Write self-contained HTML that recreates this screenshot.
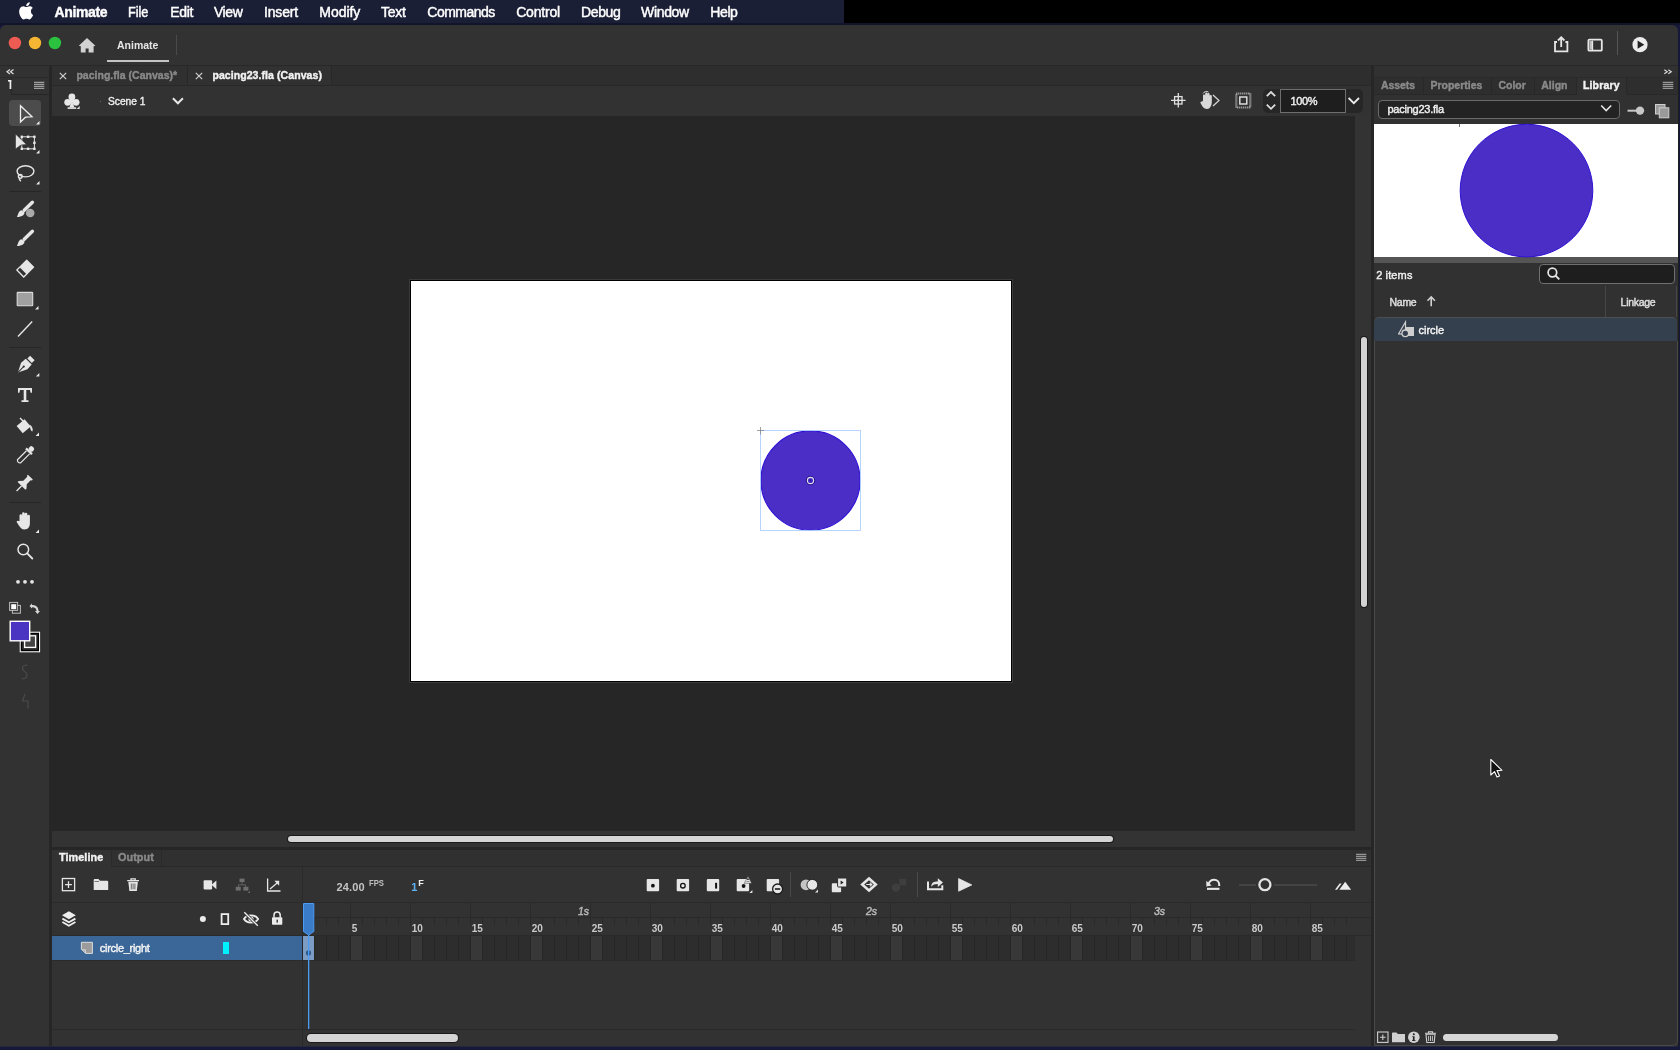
<!DOCTYPE html>
<html><head><meta charset="utf-8">
<style>
*{margin:0;padding:0;box-sizing:border-box}
html,body{width:1680px;height:1050px;overflow:hidden;background:#15183a;font-family:"Liberation Sans",sans-serif;color:#fff}
.a{position:absolute}
.t{position:absolute;white-space:nowrap;line-height:1;-webkit-text-stroke:0.4px currentColor}
#tx{position:absolute;left:0;top:0;width:1680px;height:1050px;will-change:transform}
</style></head><body>
<div class="a" style="left:0px;top:0px;width:844px;height:24px;background:#1b1f36;"></div>
<div class="a" style="left:844px;top:0px;width:836px;height:23px;background:#000;"></div>
<div class="a" style="left:0px;top:23px;width:1680px;height:2px;background:#11142a;"></div>
<div class="a" style="left:0px;top:25px;width:1678px;height:1021px;background:#323232;border-radius:6px 6px 0 0"></div>
<div class="a" style="left:1678px;top:25px;width:2px;height:1025px;background:#15183a;"></div>
<div class="a" style="left:1678px;top:66px;width:1px;height:980px;background:#1e1e1e;"></div>
<div class="a" style="left:0px;top:1046px;width:1680px;height:4px;background:#15183a;"></div>
<div class="a" style="left:0px;top:1046px;width:1678px;height:1px;background:#24263a;"></div>
<div class="a" style="left:107px;top:60px;width:62px;height:2px;background:#c4c4c4;"></div>
<div class="a" style="left:176px;top:35px;width:1px;height:20px;background:#4a4a4a;"></div>
<div class="a" style="left:1617px;top:31px;width:1px;height:24px;background:#555;"></div>
<div class="a" style="left:0px;top:65px;width:1678px;height:1px;background:#282828;"></div>
<div class="a" style="left:49px;top:66px;width:3px;height:980px;background:#262626;"></div>
<div class="a" style="left:0px;top:77px;width:49px;height:1px;background:#2a2a2a;"></div>
<div class="a" style="left:9px;top:100px;width:32px;height:26px;background:#4c4c4c;border-radius:4px"></div>
<div class="a" style="left:9px;top:191px;width:32px;height:1px;background:#262626;"></div>
<div class="a" style="left:9px;top:347px;width:32px;height:1px;background:#262626;"></div>
<div class="a" style="left:9px;top:502px;width:32px;height:1px;background:#262626;"></div>
<div class="a" style="left:1371px;top:66px;width:3px;height:980px;background:#262626;"></div>
<div class="a" style="left:52px;top:66px;width:1319px;height:19px;background:#2e2e2e;"></div>
<div class="a" style="left:52px;top:66px;width:135px;height:19px;background:#303030;"></div>
<div class="a" style="left:188px;top:66px;width:143px;height:19px;background:#313131;"></div>
<div class="a" style="left:187px;top:66px;width:1px;height:19px;background:#282828;"></div>
<div class="a" style="left:331px;top:66px;width:1px;height:19px;background:#282828;"></div>
<div class="a" style="left:52px;top:85px;width:1319px;height:1px;background:#282828;"></div>
<div class="a" style="left:52px;top:86px;width:1319px;height:30px;background:#323232;"></div>
<div class="a" style="left:100px;top:100.5px;width:1px;height:1px;background:#666;"></div>
<div class="a" style="left:1263px;top:89px;width:100px;height:24px;background:#262626;border-radius:5px"></div>
<div class="a" style="left:1280px;top:89px;width:66px;height:24px;background:#1e1e1e;border:1px solid #6e6e6e"></div>
<div class="a" style="left:52px;top:116px;width:1303px;height:715px;background:#262626;"></div>
<div class="a" style="left:1355px;top:116px;width:16px;height:715px;background:#333333;"></div>
<div class="a" style="left:1360.7px;top:337px;width:6.4px;height:270px;background:#d4d4d4;border-radius:3.2px;box-shadow:0 0 0 1px #1a1a1a"></div>
<div class="a" style="left:409px;top:279px;width:604px;height:404px;background:#3a3a3a;"></div>
<div class="a" style="left:410px;top:280px;width:602px;height:402px;background:#000000;"></div>
<div class="a" style="left:411px;top:281px;width:600px;height:400px;background:#ffffff;"></div>
<div class="a" style="left:52px;top:831px;width:1319px;height:16px;background:#333333;"></div>
<div class="a" style="left:288px;top:835.5px;width:825px;height:6.6px;background:#d4d4d4;border-radius:3.3px;box-shadow:0 0 0 1px #1a1a1a"></div>
<div class="a" style="left:52px;top:847px;width:1319px;height:3px;background:#262626;"></div>
<div class="a" style="left:52px;top:850px;width:1319px;height:196px;background:#323232;"></div>
<div class="a" style="left:111px;top:850px;width:1260px;height:16px;background:#303030;"></div>
<div class="a" style="left:111px;top:866px;width:1260px;height:1px;background:#292929;"></div>
<div class="a" style="left:111px;top:850px;width:1px;height:16px;background:#2a2a2a;"></div>
<div class="a" style="left:161px;top:850px;width:1px;height:16px;background:#2a2a2a;"></div>
<div class="a" style="left:52px;top:902px;width:250px;height:1px;background:#2a2a2a;"></div>
<div class="a" style="left:302px;top:867px;width:1px;height:179px;background:#2a2a2a;"></div>
<div class="a" style="left:52px;top:935px;width:250px;height:1px;background:#2a2a2a;"></div>
<div class="a" style="left:52px;top:936px;width:250px;height:24px;background:#3b6798;"></div>
<div class="a" style="left:223px;top:942px;width:6px;height:12px;background:#00f0ff;"></div>
<div class="a" style="left:52px;top:960px;width:250px;height:1px;background:#2a2a2a;"></div>
<div class="a" style="left:790px;top:872px;width:1px;height:25px;background:#4a4a4a;"></div>
<div class="a" style="left:917px;top:872px;width:1px;height:25px;background:#4a4a4a;"></div>
<div class="a" style="left:1238.5px;top:884px;width:17px;height:2px;background:#444444;"></div>
<div class="a" style="left:1274px;top:884px;width:42.6px;height:2px;background:#444444;"></div>
<div class="a" style="left:303px;top:903px;width:1068px;height:14px;background:#323232;"></div>
<div class="a" style="left:303px;top:917px;width:1068px;height:1px;background:#2a2a2a;"></div>
<div class="a" style="left:303px;top:935px;width:1068px;height:1px;background:#2a2a2a;"></div>
<div class="a" style="left:303px;top:936px;width:1052px;height:24px;background:#2d2d2d;"></div>
<div class="a" style="left:303px;top:960px;width:1052px;height:1px;background:#2a2a2a;"></div>
<div class="a" style="left:52px;top:902px;width:1319px;height:1px;background:#2a2a2a;"></div>
<div class="a" style="left:303px;top:936px;width:11px;height:24px;background:#7d9cc4;"></div>
<div class="a" style="left:52px;top:1029px;width:1303px;height:1px;background:#2a2a2a;"></div>
<div class="a" style="left:306.6px;top:1033.6px;width:151px;height:8.6px;background:#d4d4d4;border-radius:4.3px;box-shadow:0 0 0 1px #1a1a1a"></div>
<div class="a" style="left:1374px;top:66px;width:304px;height:980px;background:#313131;"></div>
<div class="a" style="left:1374px;top:77px;width:304px;height:1px;background:#2a2a2a;"></div>
<div class="a" style="left:1374px;top:78px;width:304px;height:16px;background:#2e2e2e;"></div>
<div class="a" style="left:1423px;top:78px;width:1px;height:16px;background:#282828;"></div>
<div class="a" style="left:1491px;top:78px;width:1px;height:16px;background:#282828;"></div>
<div class="a" style="left:1534px;top:78px;width:1px;height:16px;background:#282828;"></div>
<div class="a" style="left:1576px;top:78px;width:1px;height:16px;background:#282828;"></div>
<div class="a" style="left:1626px;top:78px;width:1px;height:16px;background:#282828;"></div>
<div class="a" style="left:1577px;top:78px;width:49px;height:17px;background:#313131;"></div>
<div class="a" style="left:1374px;top:94px;width:203px;height:1px;background:#282828;"></div>
<div class="a" style="left:1627px;top:94px;width:51px;height:1px;background:#282828;"></div>
<div class="a" style="left:1378px;top:100px;width:242px;height:19px;background:#232323;border:1px solid #6a6a6a;border-radius:4px"></div>
<div class="a" style="left:1374px;top:124px;width:304px;height:133px;background:#ffffff;"></div>
<div class="a" style="left:1459px;top:124px;width:1px;height:3px;background:#777;"></div>
<div class="a" style="left:1374px;top:257px;width:304px;height:6px;background:#555555;"></div>
<div class="a" style="left:1539px;top:264px;width:136px;height:20px;background:#1e1e1e;border:1px solid #707070;border-radius:4px"></div>
<div class="a" style="left:1605px;top:286px;width:1px;height:31px;background:#474747;"></div>
<div class="a" style="left:1676px;top:286px;width:1px;height:31px;background:#474747;"></div>
<div class="a" style="left:1374px;top:317px;width:303px;height:24px;background:#34404d;border-top:1px solid #4a4f56;border-radius:5px 5px 0 0"></div>
<div class="a" style="left:1443px;top:1034px;width:115px;height:7px;background:#d6d6d6;border-radius:3.5px"></div>
<svg class="a" style="left:0;top:0" width="1680" height="1050" viewBox="0 0 1680 1050">
<path fill="#fff" d="M30.9 11.3c0-2.2 1.8-3.2 1.9-3.3-1-1.5-2.6-1.7-3.2-1.7-1.4-.1-2.6.8-3.3.8-.7 0-1.7-.8-2.8-.8-1.5 0-2.8.9-3.6 2.2-1.5 2.7-.4 6.6 1.1 8.7.7 1 1.6 2.2 2.7 2.2 1.1 0 1.5-.7 2.8-.7 1.3 0 1.7.7 2.8.7 1.2 0 1.9-1.1 2.6-2.1.8-1.2 1.2-2.3 1.2-2.4-.1 0-2.2-.9-2.2-3.4zM28.8 4.9c.6-.7 1-1.7.9-2.7-.9 0-1.9.6-2.5 1.3-.6.6-1.1 1.6-.9 2.6 1 .1 1.9-.5 2.5-1.2z"/>
<circle cx="14.9" cy="43" r="6.2" fill="#ee5b53"/><circle cx="35" cy="43" r="6.2" fill="#f4b633"/><circle cx="54.9" cy="43" r="6.2" fill="#2bc23f"/>
<path fill="#d2d2d2" d="M87 38 L78.8 45.8 L80.8 46.2 L80.8 52.4 L85.6 52.4 L85.6 48.6 L88.6 48.6 L88.6 52.4 L93.6 52.4 L93.6 46.2 L95.4 45.8 Z"/>
<g fill="none" stroke="#e6e6e6" stroke-width="1.8"><path d="M1557 42 H1555 V51.3 H1567.4 V42 H1565.4"/><path d="M1561.2 47 V37.5 M1558 40.5 L1561.2 37.2 L1564.4 40.5"/><rect x="1588.4" y="39.7" width="13.4" height="11" rx="1"/></g>
<rect x="1589.5" y="41" width="2.6" height="8.6" fill="#bdbdbd"/><path d="M1592.5 40.7 V50" stroke="#e6e6e6" stroke-width="1.3"/>
<circle cx="1640" cy="44.7" r="7.6" fill="#ececec"/><path d="M1637.6 40.6 L1644.3 44.7 L1637.6 48.8 Z" fill="#222"/>
<path d="M10 69.5 L7 71.7 L10 73.9 M13.5 69.5 L10.5 71.7 L13.5 73.9" fill="none" stroke="#ddd" stroke-width="1.2"/>
<path d="M11.5 78 V94.5 H49" fill="none" stroke="#262626" stroke-width="1"/><rect x="8" y="80" width="3.2" height="1.6" fill="#f0f0f0"/><rect x="9.6" y="80" width="1.7" height="9" fill="#f0f0f0"/>
<g stroke="#c8c8c8" stroke-width="0.9"><path d="M34 82.3 H44.3 M34 84.3 H44.3 M34 86.3 H44.3 M34 88.3 H44.3"/></g>
<path d="M20.5 105.8 L32 116.8 L25.5 117.2 L20.5 122 Z" fill="none" stroke="#f0f0f0" stroke-width="1.3" stroke-linejoin="miter"/>
<path d="M39.5 121.1 L39.5 124.5 L36.1 124.5 Z" fill="#ececec"/>
<rect x="21.8" y="136.8" width="12.6" height="12" fill="none" stroke="#e0e0e0" stroke-width="1"/>
<g fill="#e8e8e8"><rect x="20.6" y="135.60000000000002" width="2.4" height="2.4"/><rect x="20.6" y="141.60000000000002" width="2.4" height="2.4"/><rect x="20.6" y="147.60000000000002" width="2.4" height="2.4"/><rect x="26.900000000000002" y="135.60000000000002" width="2.4" height="2.4"/><rect x="26.900000000000002" y="147.60000000000002" width="2.4" height="2.4"/><rect x="33.199999999999996" y="135.60000000000002" width="2.4" height="2.4"/><rect x="33.199999999999996" y="141.60000000000002" width="2.4" height="2.4"/><rect x="33.199999999999996" y="147.60000000000002" width="2.4" height="2.4"/></g>
<path d="M15.5 134 L26.5 144.5 L21 145 L15.5 149 Z" fill="#e6e6e6" stroke="#323232" stroke-width="0.6"/>
<path d="M39.5 150.1 L39.5 153.5 L36.1 153.5 Z" fill="#ececec"/>
<g fill="none" stroke="#e6e6e6" stroke-width="1.4"><ellipse cx="25.5" cy="171.3" rx="8.4" ry="5.6"/><circle cx="20.3" cy="176.3" r="1.9"/><path d="M19.5 178 C19 179.5 20 180.5 21 181"/></g>
<path d="M39.5 181.1 L39.5 184.5 L36.1 184.5 Z" fill="#ececec"/>
<circle cx="30.2" cy="213" r="4.3" fill="#a9a9a9"/>
<path d="M24.2 210.2 L32.4 202.2" stroke="#e6e6e6" stroke-width="3.4" stroke-linecap="round"/><path d="M21.6 210.2 C18.8 210.8 18.4 213.6 17 217 C20.8 216.7 24.4 215.6 24.6 212.4 Z" fill="#e6e6e6"/>
<path d="M24.2 239.2 L32.4 231.2" stroke="#e6e6e6" stroke-width="3.4" stroke-linecap="round"/><path d="M21.6 239.2 C18.8 239.8 18.4 242.6 17 246 C20.8 245.7 24.4 244.6 24.6 241.4 Z" fill="#e6e6e6"/>
<g transform="translate(25.3 268.5) rotate(45)"><rect x="-5.5" y="-7.5" width="11" height="10" rx="0.6" fill="#e6e6e6"/><rect x="-4.9" y="2.5" width="9.8" height="4.6" fill="#323232" stroke="#e6e6e6" stroke-width="1.3"/></g>
<rect x="17.2" y="292.4" width="15.5" height="13.3" fill="#a0a0a0" stroke="#dcdcdc" stroke-width="1.1" rx="0.5"/>
<path d="M38.5 306.1 L38.5 309.5 L35.1 309.5 Z" fill="#ececec"/>
<path d="M18 336.4 L32.2 321.6" stroke="#e6e6e6" stroke-width="1.4"/>
<g transform="translate(24.6 365.7) rotate(45)"><rect x="-3.2" y="-11" width="6.4" height="4" fill="#e6e6e6"/><path d="M-4.2 -5.8 H4.2 L4.5 0.5 L0 9.5 L-4.5 0.5 Z" fill="#e6e6e6"/><path d="M0 1 V9" stroke="#323232" stroke-width="1"/><circle cx="0" cy="1.2" r="1.1" fill="#323232"/></g>
<path d="M39.3 373.0 L39.3 376.4 L35.9 376.4 Z" fill="#ececec"/>
<path fill="#e6e6e6" d="M18 388 H32 V392.8 H30.6 L30 389.9 H26.3 V400.3 H28.5 V402 H21.5 V400.3 H23.7 V389.9 H20 L19.4 392.8 H18 Z"/>
<g transform="translate(23.5 426) rotate(-40)"><rect x="-5.2" y="-4.5" width="10.4" height="9.5" fill="#e6e6e6"/></g><path d="M20 418 L24 422" stroke="#e6e6e6" stroke-width="1.5"/><path d="M29.5 424.5 C32 426 33.3 428.5 32.5 431.5 C31 431 30.5 429.5 30.2 428" fill="#e6e6e6"/>
<path d="M39 432.6 L39 436 L35.6 436 Z" fill="#ececec"/>
<g transform="translate(25 455.3) rotate(45)"><rect x="-2.6" y="-11.5" width="5.2" height="5" rx="2" fill="#e6e6e6"/><rect x="-4.2" y="-6.8" width="8.4" height="2.3" fill="#e6e6e6"/><path d="M-2.2 -4.3 V8.5 Q0 11 2.2 8.5 V-4.3" fill="none" stroke="#e6e6e6" stroke-width="1.2"/></g>
<g transform="translate(24 483.5) rotate(45)"><path fill="#e6e6e6" d="M-3.5 -9 H3.5 V-7.8 L2.4 -7 V-1.5 L5.5 2 V3.5 H-5.5 V2 L-2.4 -1.5 V-7 L-3.5 -7.8 Z"/><path d="M0 3.5 L0 10.5" stroke="#e6e6e6" stroke-width="1.3"/></g>
<path fill="#e6e6e6" d="M19.5 521 V515.5 a1.3 1.3 0 0 1 2.6 0 V520 V513.5 a1.3 1.3 0 0 1 2.6 0 V520 V514 a1.3 1.3 0 0 1 2.6 0 V520.5 V516 a1.3 1.3 0 0 1 2.6 0 V523 C29.9 527 28 529.4 24.5 529.4 C22 529.4 20.5 528 19.2 526 L16.8 522.3 C16.2 521.3 17.5 520.2 18.4 521 Z"/>
<path d="M39 529.6 L39 533 L35.6 533 Z" fill="#ececec"/>
<circle cx="23.3" cy="549.5" r="5.3" fill="none" stroke="#e6e6e6" stroke-width="1.5"/><path d="M27.2 553.4 L32.3 558.5" stroke="#e6e6e6" stroke-width="1.8" stroke-linecap="round"/>
<circle cx="18" cy="581.8" r="1.9" fill="#e6e6e6"/><circle cx="25" cy="581.8" r="1.9" fill="#e6e6e6"/><circle cx="32" cy="581.8" r="1.9" fill="#e6e6e6"/>
<rect x="12.4" y="605.4" width="8" height="7.8" fill="none" stroke="#bdbdbd" stroke-width="1"/><rect x="9.6" y="602.4" width="8" height="8" fill="#323232" stroke="#bdbdbd" stroke-width="1"/><rect x="11.2" y="604.2" width="5" height="5" fill="#fff"/>
<path d="M29.5 606 L32 603.5 L32 605 C36 605 38.5 607 38.5 611 L40 611 L37.5 614 L35 611 L36.5 611 C36.5 608.5 35 607.2 32 607.2 L32 608.5 Z" fill="#d8d8d8"/>
<rect x="20.4" y="632.4" width="19" height="19.2" fill="none" stroke="#fff" stroke-width="1.4"/><rect x="21.5" y="633.5" width="16.8" height="17" fill="none" stroke="#000" stroke-width="1.5"/><rect x="24.6" y="635.8" width="11" height="11.6" fill="#444" stroke="#fff" stroke-width="1.3"/>
<rect x="10.2" y="621.3" width="19.5" height="19.5" fill="#4a35c2" stroke="#fff" stroke-width="1.4"/>
<path d="M27.5 665 C22 665 21 669 24.5 671.5 C28.5 674 27.5 679 21.5 679" fill="none" stroke="#4a4a4a" stroke-width="1.2"/>
<path d="M25 694 L22.5 701 H28 L28 708.5" fill="none" stroke="#4a4a4a" stroke-width="1.2"/>
<path d="M59.8 72.8 L66.2 79.2 M66.2 72.8 L59.8 79.2" stroke="#cfcfcf" stroke-width="1.2"/>
<path d="M195.8 72.8 L202.2 79.2 M202.2 72.8 L195.8 79.2" stroke="#cfcfcf" stroke-width="1.2"/>
<g fill="#e6e6e6"><circle cx="71.9" cy="96.9" r="3.4"/><circle cx="67.7" cy="102.3" r="3.4"/><circle cx="76.1" cy="102.3" r="3.4"/><rect x="69.5" y="99.5" width="4.8" height="3"/><path d="M71.9 100 L74.4 107.6 H69.4 Z"/><rect x="67.6" y="107.3" width="8.6" height="1.6"/></g>
<path d="M79.7 106 V109 H76.7 Z" fill="#e0e0e0"/>
<path d="M172.9 98.3 L177.9 103.3 L182.9 98.3" fill="none" stroke="#e6e6e6" stroke-width="2"/>
<g stroke="#e0e0e0" stroke-width="1.3" fill="none"><rect x="1174.6" y="96.6" width="7.4" height="7.4"/><path d="M1178.3 93 V107.6 M1171 100.3 H1185.6"/></g><rect x="1177.3" y="99.3" width="2" height="2" fill="#e0e0e0"/>
<path fill="#d8d8d8" d="M1203 100.5 V95.5 a1.1 1.1 0 0 1 2.2 0 V99 V93.5 a1.1 1.1 0 0 1 2.2 0 V99 V94 a1.1 1.1 0 0 1 2.2 0 V99 V96 a1.1 1.1 0 0 1 2.2 0 V102 C1211.8 105.5 1210 109 1207 109 C1205 109 1203.5 108 1202.5 106.5 L1200.5 103 C1200 102 1201.3 101 1202 101.7 Z"/>
<path d="M1213 95 L1219 100.5 L1213 106" fill="none" stroke="#d8d8d8" stroke-width="1.2"/><path d="M1203 93.5 C1204 91.5 1206.5 91 1208.5 92" fill="none" stroke="#d8d8d8" stroke-width="1"/>
<rect x="1236.3" y="93.5" width="14" height="14" fill="none" stroke="#bdbdbd" stroke-width="2.2" stroke-dasharray="1 1"/><rect x="1239.8" y="97" width="7" height="7" fill="none" stroke="#e6e6e6" stroke-width="1.4"/>
<path d="M1266.8 96.2 L1271 92 L1275.2 96.2 M1266.8 104.6 L1271 108.8 L1275.2 104.6" fill="none" stroke="#dcdcdc" stroke-width="1.8"/>
<path d="M1348.6 98 L1353.8 103.2 L1359 98" fill="none" stroke="#ececec" stroke-width="1.8"/>
<circle cx="810.5" cy="480.5" r="49.6" fill="#4a2ec6" stroke="#2e10d4" stroke-width="1.1"/>
<rect x="760.5" y="430.5" width="100" height="100" fill="none" stroke="#b0d0ff" stroke-width="0.9"/>
<path d="M757 430.5 H764 M760.5 427 V434.5" stroke="#7a7a7a" stroke-width="0.7"/>
<circle cx="810.5" cy="480.5" r="4.2" fill="none" stroke="#1c0c70" stroke-width="0.9"/><circle cx="810.5" cy="480.5" r="3.1" fill="none" stroke="#e0e0ee" stroke-width="1.1"/><rect x="809.4" y="479.4" width="2.2" height="2.2" fill="#2a18b0"/>
<g stroke="#bdbdbd" stroke-width="0.9"><path d="M1356 854.3 H1366.3 M1356 856.3 H1366.3 M1356 858.3 H1366.3 M1356 860.3 H1366.3"/></g>
<rect x="62.4" y="878.5" width="12.2" height="12.2" fill="none" stroke="#e6e6e6" stroke-width="1.3"/><path d="M68.5 881.2 V888 M65.1 884.6 H71.9" stroke="#e6e6e6" stroke-width="1.3"/>
<path d="M93.7 880 Q93.7 879 94.7 879 H98.5 L100 880.8 H107.2 Q108.2 880.8 108.2 881.8 V890 H93.7 Z" fill="#e6e6e6"/><path d="M94.5 881.5 H99" stroke="#323232" stroke-width="0.6"/>
<path d="M127.2 880.6 H139 M131 880.6 V878.8 H135.2 V880.6" fill="none" stroke="#e6e6e6" stroke-width="1.3"/><path d="M128.3 881.8 H137.9 L136.8 891.1 H129.4 Z" fill="#e6e6e6"/><path d="M131.3 883.5 V889.4 M133.1 883.5 V889.4 M134.9 883.5 V889.4" stroke="#323232" stroke-width="0.7"/>
<rect x="203.6" y="880.2" width="8.5" height="9.3" rx="1" fill="#e6e6e6"/><path d="M211.5 884.8 L216.4 880.5 V889.3 Z" fill="#e6e6e6"/>
<g fill="#6e6e6e"><rect x="239.5" y="878.6" width="5" height="3.5"/><rect x="235.7" y="886.8" width="5" height="3.8"/><rect x="243.4" y="886.8" width="5" height="3.8"/><path d="M241.7 882 V884.5 H238.2 V886.8 H239 V885.3 H245 V886.8 H245.8 V884.5 H242.3 V882 Z"/></g><path d="M250 890.8 V893 H247.8 Z" fill="#6e6e6e"/>
<path d="M267.6 878.6 V891 H280.5" fill="none" stroke="#e6e6e6" stroke-width="1.3"/><path d="M270 889 L278 882.3" stroke="#e6e6e6" stroke-width="1.3"/><path d="M274.3 880.8 H279.2 V885.7 Z" fill="#e6e6e6"/>
<path d="M62 915.2 L68.9 911.2 L75.8 915.2 L68.9 919.2 Z" fill="#eeeeee"/><path d="M62.4 918.6 L68.9 922.3 L75.4 918.6 M62.4 922 L68.9 925.7 L75.4 922" fill="none" stroke="#eeeeee" stroke-width="1.8"/>
<circle cx="202.9" cy="918.9" r="3" fill="#ececec"/>
<rect x="221.6" y="914.1" width="6.6" height="10" fill="none" stroke="#ececec" stroke-width="1.8"/>
<path d="M244 919 C246.8 914.2 255.3 914.2 258.1 919 C255.3 923.8 246.8 923.8 244 919 Z" fill="none" stroke="#ececec" stroke-width="1.9"/><circle cx="251" cy="919" r="2.6" fill="#ececec"/><path d="M244.5 912.5 L257.5 925.5" stroke="#323232" stroke-width="3"/><path d="M244.3 912.3 L257.8 925.8" stroke="#ececec" stroke-width="1.3"/>
<path d="M274 917.5 V915.2 a3.1 3.1 0 0 1 6.2 0 V917.5" fill="none" stroke="#ececec" stroke-width="1.5"/><rect x="272" y="917.3" width="10.3" height="7.5" rx="0.8" fill="#ececec"/><rect x="276.5" y="919.6" width="1.4" height="3" fill="#323232"/>
<path d="M81.4 942.3 H92.4 V953.4 H85.6 L81.4 949.2 Z" fill="#9c9c9c" stroke="#dcdcdc" stroke-width="1"/><path d="M82.2 949.8 H85.4 V953" fill="none" stroke="#dcdcdc" stroke-width="1"/>
<rect x="646.7" y="879" width="12.4" height="12.2" rx="1" fill="#e6e6e6"/><circle cx="652.9" cy="885.7" r="1.9" fill="#111"/>
<rect x="676.7" y="879" width="12.4" height="12.2" rx="1" fill="#e6e6e6"/><circle cx="682.9" cy="885.7" r="2.3" fill="none" stroke="#111" stroke-width="1.3"/>
<rect x="706.8" y="879" width="12.4" height="12.2" rx="1" fill="#e6e6e6"/><rect x="715.1" y="882.8" width="2" height="5.8" fill="#111"/>
<rect x="736.7" y="879" width="12.4" height="12.2" rx="1" fill="#e6e6e6"/><circle cx="743.6" cy="886" r="1.9" fill="#111"/>
<path d="M744.3 883.3 L748 876.2 L751.7 883.3 Z M746.5 881.5 H749.5" fill="#e6e6e6" stroke="#323232" stroke-width="0.5"/><path d="M746.8 880 L748 877.8 L749.2 880 Z" fill="#323232"/><path d="M752.4 890 V893 H749.4 Z" fill="#e0e0e0"/>
<rect x="766.7" y="879" width="12.4" height="12.2" rx="1" fill="#e6e6e6"/>
<circle cx="777.6" cy="889" r="5" fill="#e6e6e6" stroke="#1a1a1a" stroke-width="1.3"/><path d="M774.9 889 H780.3" stroke="#111" stroke-width="1.5"/>
<circle cx="806" cy="884.8" r="5.4" fill="#c4c4c4"/><circle cx="812.3" cy="884.8" r="5.4" fill="#e6e6e6" stroke="#1e1e1e" stroke-width="0.9"/><path d="M818 889.5 V892.5 H815 Z" fill="#e0e0e0"/>
<rect x="831.8" y="883.2" width="9.3" height="9" rx="0.8" fill="#e6e6e6"/><rect x="837.6" y="878" width="9.2" height="9" rx="0.8" fill="#e6e6e6" stroke="#2a2a2a" stroke-width="1"/><path d="M840.6 880.6 L843.6 882.5 L840.6 884.4 Z" fill="#222"/>
<path d="M869 878.5 L875.8 884.5 L869 890.5 L862.2 884.5 Z" fill="none" stroke="#e6e6e6" stroke-width="2.6"/><path d="M866.2 884.5 H871.5 M869.8 882.6 L871.8 884.5 L869.8 886.4" fill="none" stroke="#e6e6e6" stroke-width="1.1"/>
<circle cx="896" cy="887.6" r="4.2" fill="#3e3e3e"/><rect x="899.2" y="878.8" width="7" height="6.6" fill="#3e3e3e"/>
<path d="M928 881.5 V889.2 H942.3 V885.2" fill="none" stroke="#e6e6e6" stroke-width="2"/><path d="M931.3 886.8 C931.3 882.8 933.8 881.6 937.8 881.6 V878.3 L943 882.6 L937.8 886.9 V884 C934.8 884 932.8 884.6 931.3 886.8 Z" fill="#e6e6e6"/>
<path d="M958.6 878.6 L971.8 884.9 L958.6 891.2 Z" fill="#e6e6e6" stroke="#e6e6e6" stroke-width="0.8" stroke-linejoin="round"/>
<path d="M1208.4 884.6 C1209.2 881.2 1211.8 879.8 1214.2 879.8 C1217.2 879.8 1219.2 882 1219.2 884.8 V886" fill="none" stroke="#e6e6e6" stroke-width="2"/><path d="M1206.3 880.8 L1211.6 885.6 L1206.3 886.4 Z" fill="#e6e6e6"/><rect x="1207" y="887.8" width="12.4" height="2.1" fill="#e6e6e6"/>
<circle cx="1264.9" cy="884.7" r="5.5" fill="none" stroke="#e3e3e3" stroke-width="2.3"/>
<path d="M1339.3 889.8 L1345.2 881.7 L1351.1 889.8 Z" fill="#ececec"/><path d="M1335 889.8 L1339.6 883.6 L1341.6 883.6 L1337 889.8 Z" fill="#ececec"/>
<rect x="302" y="936" width="1" height="24" fill="#262626"/><rect x="302" y="917" width="1" height="8.5" fill="#2a2a2a"/><rect x="314" y="936" width="1" height="24" fill="#262626"/><rect x="314" y="917" width="1" height="8.5" fill="#2a2a2a"/><rect x="326" y="936" width="1" height="24" fill="#262626"/><rect x="326" y="917" width="1" height="8.5" fill="#2a2a2a"/><rect x="338" y="936" width="1" height="24" fill="#262626"/><rect x="338" y="917" width="1" height="8.5" fill="#2a2a2a"/><rect x="350" y="936" width="1" height="24" fill="#262626"/><rect x="350" y="917" width="1" height="8.5" fill="#2a2a2a"/><rect x="351" y="936" width="11" height="24" fill="#383838"/><rect x="350" y="903" width="1" height="14" fill="#2a2a2a"/><rect x="362" y="936" width="1" height="24" fill="#262626"/><rect x="362" y="917" width="1" height="8.5" fill="#2a2a2a"/><rect x="374" y="936" width="1" height="24" fill="#262626"/><rect x="374" y="917" width="1" height="8.5" fill="#2a2a2a"/><rect x="386" y="936" width="1" height="24" fill="#262626"/><rect x="386" y="917" width="1" height="8.5" fill="#2a2a2a"/><rect x="398" y="936" width="1" height="24" fill="#262626"/><rect x="398" y="917" width="1" height="8.5" fill="#2a2a2a"/><rect x="410" y="936" width="1" height="24" fill="#262626"/><rect x="410" y="917" width="1" height="8.5" fill="#2a2a2a"/><rect x="411" y="936" width="11" height="24" fill="#383838"/><rect x="410" y="903" width="1" height="14" fill="#2a2a2a"/><rect x="422" y="936" width="1" height="24" fill="#262626"/><rect x="422" y="917" width="1" height="8.5" fill="#2a2a2a"/><rect x="434" y="936" width="1" height="24" fill="#262626"/><rect x="434" y="917" width="1" height="8.5" fill="#2a2a2a"/><rect x="446" y="936" width="1" height="24" fill="#262626"/><rect x="446" y="917" width="1" height="8.5" fill="#2a2a2a"/><rect x="458" y="936" width="1" height="24" fill="#262626"/><rect x="458" y="917" width="1" height="8.5" fill="#2a2a2a"/><rect x="470" y="936" width="1" height="24" fill="#262626"/><rect x="470" y="917" width="1" height="8.5" fill="#2a2a2a"/><rect x="471" y="936" width="11" height="24" fill="#383838"/><rect x="470" y="903" width="1" height="14" fill="#2a2a2a"/><rect x="482" y="936" width="1" height="24" fill="#262626"/><rect x="482" y="917" width="1" height="8.5" fill="#2a2a2a"/><rect x="494" y="936" width="1" height="24" fill="#262626"/><rect x="494" y="917" width="1" height="8.5" fill="#2a2a2a"/><rect x="506" y="936" width="1" height="24" fill="#262626"/><rect x="506" y="917" width="1" height="8.5" fill="#2a2a2a"/><rect x="518" y="936" width="1" height="24" fill="#262626"/><rect x="518" y="917" width="1" height="8.5" fill="#2a2a2a"/><rect x="530" y="936" width="1" height="24" fill="#262626"/><rect x="530" y="917" width="1" height="8.5" fill="#2a2a2a"/><rect x="531" y="936" width="11" height="24" fill="#383838"/><rect x="530" y="903" width="1" height="14" fill="#2a2a2a"/><rect x="542" y="936" width="1" height="24" fill="#262626"/><rect x="542" y="917" width="1" height="8.5" fill="#2a2a2a"/><rect x="554" y="936" width="1" height="24" fill="#262626"/><rect x="554" y="917" width="1" height="8.5" fill="#2a2a2a"/><rect x="566" y="936" width="1" height="24" fill="#262626"/><rect x="566" y="917" width="1" height="8.5" fill="#2a2a2a"/><rect x="578" y="936" width="1" height="24" fill="#262626"/><rect x="578" y="917" width="1" height="8.5" fill="#2a2a2a"/><rect x="590" y="936" width="1" height="24" fill="#262626"/><rect x="590" y="917" width="1" height="8.5" fill="#2a2a2a"/><rect x="591" y="936" width="11" height="24" fill="#383838"/><rect x="590" y="903" width="1" height="14" fill="#2a2a2a"/><rect x="602" y="936" width="1" height="24" fill="#262626"/><rect x="602" y="917" width="1" height="8.5" fill="#2a2a2a"/><rect x="614" y="936" width="1" height="24" fill="#262626"/><rect x="614" y="917" width="1" height="8.5" fill="#2a2a2a"/><rect x="626" y="936" width="1" height="24" fill="#262626"/><rect x="626" y="917" width="1" height="8.5" fill="#2a2a2a"/><rect x="638" y="936" width="1" height="24" fill="#262626"/><rect x="638" y="917" width="1" height="8.5" fill="#2a2a2a"/><rect x="650" y="936" width="1" height="24" fill="#262626"/><rect x="650" y="917" width="1" height="8.5" fill="#2a2a2a"/><rect x="651" y="936" width="11" height="24" fill="#383838"/><rect x="650" y="903" width="1" height="14" fill="#2a2a2a"/><rect x="662" y="936" width="1" height="24" fill="#262626"/><rect x="662" y="917" width="1" height="8.5" fill="#2a2a2a"/><rect x="674" y="936" width="1" height="24" fill="#262626"/><rect x="674" y="917" width="1" height="8.5" fill="#2a2a2a"/><rect x="686" y="936" width="1" height="24" fill="#262626"/><rect x="686" y="917" width="1" height="8.5" fill="#2a2a2a"/><rect x="698" y="936" width="1" height="24" fill="#262626"/><rect x="698" y="917" width="1" height="8.5" fill="#2a2a2a"/><rect x="710" y="936" width="1" height="24" fill="#262626"/><rect x="710" y="917" width="1" height="8.5" fill="#2a2a2a"/><rect x="711" y="936" width="11" height="24" fill="#383838"/><rect x="710" y="903" width="1" height="14" fill="#2a2a2a"/><rect x="722" y="936" width="1" height="24" fill="#262626"/><rect x="722" y="917" width="1" height="8.5" fill="#2a2a2a"/><rect x="734" y="936" width="1" height="24" fill="#262626"/><rect x="734" y="917" width="1" height="8.5" fill="#2a2a2a"/><rect x="746" y="936" width="1" height="24" fill="#262626"/><rect x="746" y="917" width="1" height="8.5" fill="#2a2a2a"/><rect x="758" y="936" width="1" height="24" fill="#262626"/><rect x="758" y="917" width="1" height="8.5" fill="#2a2a2a"/><rect x="770" y="936" width="1" height="24" fill="#262626"/><rect x="770" y="917" width="1" height="8.5" fill="#2a2a2a"/><rect x="771" y="936" width="11" height="24" fill="#383838"/><rect x="770" y="903" width="1" height="14" fill="#2a2a2a"/><rect x="782" y="936" width="1" height="24" fill="#262626"/><rect x="782" y="917" width="1" height="8.5" fill="#2a2a2a"/><rect x="794" y="936" width="1" height="24" fill="#262626"/><rect x="794" y="917" width="1" height="8.5" fill="#2a2a2a"/><rect x="806" y="936" width="1" height="24" fill="#262626"/><rect x="806" y="917" width="1" height="8.5" fill="#2a2a2a"/><rect x="818" y="936" width="1" height="24" fill="#262626"/><rect x="818" y="917" width="1" height="8.5" fill="#2a2a2a"/><rect x="830" y="936" width="1" height="24" fill="#262626"/><rect x="830" y="917" width="1" height="8.5" fill="#2a2a2a"/><rect x="831" y="936" width="11" height="24" fill="#383838"/><rect x="830" y="903" width="1" height="14" fill="#2a2a2a"/><rect x="842" y="936" width="1" height="24" fill="#262626"/><rect x="842" y="917" width="1" height="8.5" fill="#2a2a2a"/><rect x="854" y="936" width="1" height="24" fill="#262626"/><rect x="854" y="917" width="1" height="8.5" fill="#2a2a2a"/><rect x="866" y="936" width="1" height="24" fill="#262626"/><rect x="866" y="917" width="1" height="8.5" fill="#2a2a2a"/><rect x="878" y="936" width="1" height="24" fill="#262626"/><rect x="878" y="917" width="1" height="8.5" fill="#2a2a2a"/><rect x="890" y="936" width="1" height="24" fill="#262626"/><rect x="890" y="917" width="1" height="8.5" fill="#2a2a2a"/><rect x="891" y="936" width="11" height="24" fill="#383838"/><rect x="890" y="903" width="1" height="14" fill="#2a2a2a"/><rect x="902" y="936" width="1" height="24" fill="#262626"/><rect x="902" y="917" width="1" height="8.5" fill="#2a2a2a"/><rect x="914" y="936" width="1" height="24" fill="#262626"/><rect x="914" y="917" width="1" height="8.5" fill="#2a2a2a"/><rect x="926" y="936" width="1" height="24" fill="#262626"/><rect x="926" y="917" width="1" height="8.5" fill="#2a2a2a"/><rect x="938" y="936" width="1" height="24" fill="#262626"/><rect x="938" y="917" width="1" height="8.5" fill="#2a2a2a"/><rect x="950" y="936" width="1" height="24" fill="#262626"/><rect x="950" y="917" width="1" height="8.5" fill="#2a2a2a"/><rect x="951" y="936" width="11" height="24" fill="#383838"/><rect x="950" y="903" width="1" height="14" fill="#2a2a2a"/><rect x="962" y="936" width="1" height="24" fill="#262626"/><rect x="962" y="917" width="1" height="8.5" fill="#2a2a2a"/><rect x="974" y="936" width="1" height="24" fill="#262626"/><rect x="974" y="917" width="1" height="8.5" fill="#2a2a2a"/><rect x="986" y="936" width="1" height="24" fill="#262626"/><rect x="986" y="917" width="1" height="8.5" fill="#2a2a2a"/><rect x="998" y="936" width="1" height="24" fill="#262626"/><rect x="998" y="917" width="1" height="8.5" fill="#2a2a2a"/><rect x="1010" y="936" width="1" height="24" fill="#262626"/><rect x="1010" y="917" width="1" height="8.5" fill="#2a2a2a"/><rect x="1011" y="936" width="11" height="24" fill="#383838"/><rect x="1010" y="903" width="1" height="14" fill="#2a2a2a"/><rect x="1022" y="936" width="1" height="24" fill="#262626"/><rect x="1022" y="917" width="1" height="8.5" fill="#2a2a2a"/><rect x="1034" y="936" width="1" height="24" fill="#262626"/><rect x="1034" y="917" width="1" height="8.5" fill="#2a2a2a"/><rect x="1046" y="936" width="1" height="24" fill="#262626"/><rect x="1046" y="917" width="1" height="8.5" fill="#2a2a2a"/><rect x="1058" y="936" width="1" height="24" fill="#262626"/><rect x="1058" y="917" width="1" height="8.5" fill="#2a2a2a"/><rect x="1070" y="936" width="1" height="24" fill="#262626"/><rect x="1070" y="917" width="1" height="8.5" fill="#2a2a2a"/><rect x="1071" y="936" width="11" height="24" fill="#383838"/><rect x="1070" y="903" width="1" height="14" fill="#2a2a2a"/><rect x="1082" y="936" width="1" height="24" fill="#262626"/><rect x="1082" y="917" width="1" height="8.5" fill="#2a2a2a"/><rect x="1094" y="936" width="1" height="24" fill="#262626"/><rect x="1094" y="917" width="1" height="8.5" fill="#2a2a2a"/><rect x="1106" y="936" width="1" height="24" fill="#262626"/><rect x="1106" y="917" width="1" height="8.5" fill="#2a2a2a"/><rect x="1118" y="936" width="1" height="24" fill="#262626"/><rect x="1118" y="917" width="1" height="8.5" fill="#2a2a2a"/><rect x="1130" y="936" width="1" height="24" fill="#262626"/><rect x="1130" y="917" width="1" height="8.5" fill="#2a2a2a"/><rect x="1131" y="936" width="11" height="24" fill="#383838"/><rect x="1130" y="903" width="1" height="14" fill="#2a2a2a"/><rect x="1142" y="936" width="1" height="24" fill="#262626"/><rect x="1142" y="917" width="1" height="8.5" fill="#2a2a2a"/><rect x="1154" y="936" width="1" height="24" fill="#262626"/><rect x="1154" y="917" width="1" height="8.5" fill="#2a2a2a"/><rect x="1166" y="936" width="1" height="24" fill="#262626"/><rect x="1166" y="917" width="1" height="8.5" fill="#2a2a2a"/><rect x="1178" y="936" width="1" height="24" fill="#262626"/><rect x="1178" y="917" width="1" height="8.5" fill="#2a2a2a"/><rect x="1190" y="936" width="1" height="24" fill="#262626"/><rect x="1190" y="917" width="1" height="8.5" fill="#2a2a2a"/><rect x="1191" y="936" width="11" height="24" fill="#383838"/><rect x="1190" y="903" width="1" height="14" fill="#2a2a2a"/><rect x="1202" y="936" width="1" height="24" fill="#262626"/><rect x="1202" y="917" width="1" height="8.5" fill="#2a2a2a"/><rect x="1214" y="936" width="1" height="24" fill="#262626"/><rect x="1214" y="917" width="1" height="8.5" fill="#2a2a2a"/><rect x="1226" y="936" width="1" height="24" fill="#262626"/><rect x="1226" y="917" width="1" height="8.5" fill="#2a2a2a"/><rect x="1238" y="936" width="1" height="24" fill="#262626"/><rect x="1238" y="917" width="1" height="8.5" fill="#2a2a2a"/><rect x="1250" y="936" width="1" height="24" fill="#262626"/><rect x="1250" y="917" width="1" height="8.5" fill="#2a2a2a"/><rect x="1251" y="936" width="11" height="24" fill="#383838"/><rect x="1250" y="903" width="1" height="14" fill="#2a2a2a"/><rect x="1262" y="936" width="1" height="24" fill="#262626"/><rect x="1262" y="917" width="1" height="8.5" fill="#2a2a2a"/><rect x="1274" y="936" width="1" height="24" fill="#262626"/><rect x="1274" y="917" width="1" height="8.5" fill="#2a2a2a"/><rect x="1286" y="936" width="1" height="24" fill="#262626"/><rect x="1286" y="917" width="1" height="8.5" fill="#2a2a2a"/><rect x="1298" y="936" width="1" height="24" fill="#262626"/><rect x="1298" y="917" width="1" height="8.5" fill="#2a2a2a"/><rect x="1310" y="936" width="1" height="24" fill="#262626"/><rect x="1310" y="917" width="1" height="8.5" fill="#2a2a2a"/><rect x="1311" y="936" width="11" height="24" fill="#383838"/><rect x="1310" y="903" width="1" height="14" fill="#2a2a2a"/><rect x="1322" y="936" width="1" height="24" fill="#262626"/><rect x="1322" y="917" width="1" height="8.5" fill="#2a2a2a"/><rect x="1334" y="936" width="1" height="24" fill="#262626"/><rect x="1334" y="917" width="1" height="8.5" fill="#2a2a2a"/><rect x="1346" y="936" width="1" height="24" fill="#262626"/><rect x="1346" y="917" width="1" height="8.5" fill="#2a2a2a"/>
<circle cx="308.5" cy="952.9" r="2.6" fill="#2e5a8a"/>
<path d="M303.5 903.5 H313.8 V931.5 L308.65 935 L303.5 931.5 Z" fill="#3b7cc8" stroke="#4b9cf2" stroke-width="1"/>
<rect x="308" y="935" width="1.3" height="94" fill="#4b9cf5"/>
<path d="M1664.3 69.8 L1667.3 71.8 L1664.3 73.8 M1668.3 69.8 L1671.3 71.8 L1668.3 73.8" fill="none" stroke="#ddd" stroke-width="1.1"/>
<g stroke="#bdbdbd" stroke-width="0.9"><path d="M1662.7 82.3 H1673.3 M1662.7 84.3 H1673.3 M1662.7 86.3 H1673.3 M1662.7 88.3 H1673.3"/></g>
<path d="M1601.2 105.5 L1606.2 110.5 L1611.2 105.5" fill="none" stroke="#e6e6e6" stroke-width="1.6"/>
<path d="M1627.5 110.7 H1638" stroke="#c8c8c8" stroke-width="2"/><circle cx="1640" cy="110.6" r="4.2" fill="#c8c8c8"/>
<rect x="1655.5" y="104.5" width="9.5" height="9.5" fill="#9a9a9a" stroke="#cfcfcf" stroke-width="1"/><rect x="1659.3" y="107.8" width="9.5" height="10" fill="#9a9a9a" stroke="#cfcfcf" stroke-width="1"/>
<circle cx="1526.5" cy="190.6" r="66.3" fill="#4a2ec6" stroke="#2e10d4" stroke-width="1"/>
<circle cx="1552.4" cy="272.5" r="4.3" fill="none" stroke="#e6e6e6" stroke-width="1.7"/><path d="M1555.5 275.6 L1559.3 279.4" stroke="#e6e6e6" stroke-width="1.9"/>
<path d="M1431.2 306.2 V297.5 M1427.5 300.8 L1431.2 297 L1434.9 300.8" fill="none" stroke="#d0d0d0" stroke-width="1.6"/>
<path d="M1398.5 334 L1405.5 322 V331" fill="none" stroke="#cfcfcf" stroke-width="1.2"/><rect x="1406" y="327" width="8" height="9" fill="#cfcfcf"/><circle cx="1405.3" cy="333.3" r="3.3" fill="#34404d" stroke="#cfcfcf" stroke-width="1.3"/><path d="M1398.3 334 H1402" stroke="#cfcfcf" stroke-width="1.2"/>
<path d="M1374.5 341 V1045.5 H1672 Q1677.5 1045.5 1677.5 1040 V341" fill="none" stroke="#4a4a4a" stroke-width="1"/>
<rect x="1377.6" y="1032" width="10.4" height="10.4" fill="none" stroke="#cfcfcf" stroke-width="1.1"/><path d="M1382.8 1034.5 V1040 M1380 1037.2 H1385.6" stroke="#cfcfcf" stroke-width="1.1"/>
<path d="M1392 1033.3 Q1392 1032.5 1392.8 1032.5 H1396.5 L1397.8 1034 H1405 V1042.2 H1392 Z" fill="#d0d0d0"/>
<circle cx="1413.8" cy="1037.2" r="5.8" fill="#d0d0d0"/><path d="M1412.3 1036.2 H1414.6 V1040.3 H1415.5 V1041 H1412 V1040.3 H1412.9 V1036.9 H1412.3 Z" fill="#222"/><circle cx="1413.8" cy="1034.2" r="1" fill="#222"/>
<path d="M1425 1033.2 H1436 M1428.5 1033.2 V1031.8 H1432.5 V1033.2" fill="none" stroke="#d0d0d0" stroke-width="1.1"/><path d="M1426 1034.3 H1435 L1434.2 1042.5 H1426.8 Z" fill="none" stroke="#d0d0d0" stroke-width="1.1"/><path d="M1428.6 1035.8 V1041 M1430.5 1035.8 V1041 M1432.4 1035.8 V1041" stroke="#d0d0d0" stroke-width="0.9"/>
<path d="M1490.8 759.5 L1490.8 775 L1494.5 771.6 L1497 777 L1499.5 776 L1497 770.6 L1502 770.3 Z" fill="#111" stroke="#fff" stroke-width="1.1" stroke-linejoin="round"/>
</svg>
<div id="tx">
<div class="t" style="left:54.50px;top:4.75px;font-size:14px;color:#fff;font-weight:bold;font-style:normal;letter-spacing:-0.373px;">Animate</div>
<div class="t" style="left:128.20px;top:4.75px;font-size:14px;color:#fff;font-weight:normal;font-style:normal;transform:scaleX(0.9043);transform-origin:0 0;-webkit-text-stroke:0.45px currentColor;">File</div>
<div class="t" style="left:170.30px;top:4.75px;font-size:14px;color:#fff;font-weight:normal;font-style:normal;letter-spacing:-0.375px;-webkit-text-stroke:0.45px currentColor;">Edit</div>
<div class="t" style="left:213.90px;top:4.75px;font-size:14px;color:#fff;font-weight:normal;font-style:normal;letter-spacing:-0.364px;-webkit-text-stroke:0.45px currentColor;">View</div>
<div class="t" style="left:263.90px;top:4.75px;font-size:14px;color:#fff;font-weight:normal;font-style:normal;letter-spacing:-0.143px;-webkit-text-stroke:0.45px currentColor;">Insert</div>
<div class="t" style="left:319.30px;top:4.75px;font-size:14px;color:#fff;font-weight:normal;font-style:normal;letter-spacing:-0.047px;-webkit-text-stroke:0.45px currentColor;">Modify</div>
<div class="t" style="left:380.90px;top:4.75px;font-size:14px;color:#fff;font-weight:normal;font-style:normal;letter-spacing:-0.225px;-webkit-text-stroke:0.45px currentColor;">Text</div>
<div class="t" style="left:427.30px;top:4.75px;font-size:14px;color:#fff;font-weight:normal;font-style:normal;letter-spacing:-0.512px;-webkit-text-stroke:0.45px currentColor;">Commands</div>
<div class="t" style="left:516.20px;top:4.75px;font-size:14px;color:#fff;font-weight:normal;font-style:normal;letter-spacing:-0.189px;-webkit-text-stroke:0.45px currentColor;">Control</div>
<div class="t" style="left:581.10px;top:4.75px;font-size:14px;color:#fff;font-weight:normal;font-style:normal;letter-spacing:-0.414px;-webkit-text-stroke:0.45px currentColor;">Debug</div>
<div class="t" style="left:641.10px;top:4.75px;font-size:14px;color:#fff;font-weight:normal;font-style:normal;letter-spacing:-0.359px;-webkit-text-stroke:0.45px currentColor;">Window</div>
<div class="t" style="left:710.30px;top:4.75px;font-size:14px;color:#fff;font-weight:normal;font-style:normal;letter-spacing:-0.398px;-webkit-text-stroke:0.45px currentColor;">Help</div>
<div class="t" style="left:116.80px;top:40.32px;font-size:11.2px;color:#e6e6e6;font-weight:bold;font-style:normal;transform:scaleX(0.9392);transform-origin:0 0;-webkit-text-stroke:0px currentColor;">Animate</div>
<div class="t" style="left:76.40px;top:69.91px;font-size:10.5px;color:#8a8a8a;font-weight:bold;font-style:normal;letter-spacing:0.023px;">pacing.fla (Canvas)*</div>
<div class="t" style="left:212.40px;top:69.91px;font-size:10.5px;color:#f2f2f2;font-weight:bold;font-style:normal;letter-spacing:0.077px;">pacing23.fla (Canvas)</div>
<div class="t" style="left:107.60px;top:95.91px;font-size:11.8px;color:#f0f0f0;font-weight:normal;font-style:normal;transform:scaleX(0.8660);transform-origin:0 0;">Scene 1</div>
<div class="t" style="left:1290.50px;top:96.19px;font-size:11px;color:#f0f0f0;font-weight:normal;font-style:normal;letter-spacing:-0.378px;">100%</div>
<div class="t" style="left:58.90px;top:852.06px;font-size:10.8px;color:#f2f2f2;font-weight:bold;font-style:normal;letter-spacing:0.098px;">Timeline</div>
<div class="t" style="left:117.90px;top:852.06px;font-size:10.8px;color:#8a8a8a;font-weight:bold;font-style:normal;letter-spacing:0.123px;">Output</div>
<div class="t" style="left:99.80px;top:942.99px;font-size:11px;color:#f4f4f4;font-weight:normal;font-style:normal;letter-spacing:-0.290px;">circle_right</div>
<div class="t" style="left:336.50px;top:881.99px;font-size:11px;color:#c4c4c4;font-weight:bold;font-style:normal;letter-spacing:0.168px;-webkit-text-stroke:0px currentColor;">24.00</div>
<div class="t" style="left:369.00px;top:879.19px;font-size:8.4px;color:#c0c0c0;font-weight:bold;font-style:normal;transform:scaleX(0.9181);transform-origin:0 0;-webkit-text-stroke:0px currentColor;">FPS</div>
<div class="t" style="left:411.20px;top:882.19px;font-size:11px;color:#5fb2f2;font-weight:bold;font-style:normal;-webkit-text-stroke:0px currentColor;">1</div>
<div class="t" style="left:418.20px;top:878.68px;font-size:9px;color:#f0f0f0;font-weight:bold;font-style:normal;-webkit-text-stroke:0px currentColor;">F</div>
<div class="t" style="left:351.70px;top:924.13px;font-size:10px;color:#cacaca;font-weight:bold;font-style:normal;-webkit-text-stroke:0px currentColor;">5</div>
<div class="t" style="left:411.70px;top:924.13px;font-size:10px;color:#cacaca;font-weight:bold;font-style:normal;-webkit-text-stroke:0px currentColor;">10</div>
<div class="t" style="left:471.70px;top:924.13px;font-size:10px;color:#cacaca;font-weight:bold;font-style:normal;-webkit-text-stroke:0px currentColor;">15</div>
<div class="t" style="left:531.70px;top:924.13px;font-size:10px;color:#cacaca;font-weight:bold;font-style:normal;-webkit-text-stroke:0px currentColor;">20</div>
<div class="t" style="left:591.70px;top:924.13px;font-size:10px;color:#cacaca;font-weight:bold;font-style:normal;-webkit-text-stroke:0px currentColor;">25</div>
<div class="t" style="left:651.70px;top:924.13px;font-size:10px;color:#cacaca;font-weight:bold;font-style:normal;-webkit-text-stroke:0px currentColor;">30</div>
<div class="t" style="left:711.70px;top:924.13px;font-size:10px;color:#cacaca;font-weight:bold;font-style:normal;-webkit-text-stroke:0px currentColor;">35</div>
<div class="t" style="left:771.70px;top:924.13px;font-size:10px;color:#cacaca;font-weight:bold;font-style:normal;-webkit-text-stroke:0px currentColor;">40</div>
<div class="t" style="left:831.70px;top:924.13px;font-size:10px;color:#cacaca;font-weight:bold;font-style:normal;-webkit-text-stroke:0px currentColor;">45</div>
<div class="t" style="left:891.70px;top:924.13px;font-size:10px;color:#cacaca;font-weight:bold;font-style:normal;-webkit-text-stroke:0px currentColor;">50</div>
<div class="t" style="left:951.70px;top:924.13px;font-size:10px;color:#cacaca;font-weight:bold;font-style:normal;-webkit-text-stroke:0px currentColor;">55</div>
<div class="t" style="left:1011.70px;top:924.13px;font-size:10px;color:#cacaca;font-weight:bold;font-style:normal;-webkit-text-stroke:0px currentColor;">60</div>
<div class="t" style="left:1071.70px;top:924.13px;font-size:10px;color:#cacaca;font-weight:bold;font-style:normal;-webkit-text-stroke:0px currentColor;">65</div>
<div class="t" style="left:1131.70px;top:924.13px;font-size:10px;color:#cacaca;font-weight:bold;font-style:normal;-webkit-text-stroke:0px currentColor;">70</div>
<div class="t" style="left:1191.70px;top:924.13px;font-size:10px;color:#cacaca;font-weight:bold;font-style:normal;-webkit-text-stroke:0px currentColor;">75</div>
<div class="t" style="left:1251.70px;top:924.13px;font-size:10px;color:#cacaca;font-weight:bold;font-style:normal;-webkit-text-stroke:0px currentColor;">80</div>
<div class="t" style="left:1311.70px;top:924.13px;font-size:10px;color:#cacaca;font-weight:bold;font-style:normal;-webkit-text-stroke:0px currentColor;">85</div>
<div class="t" style="left:577.91px;top:905.61px;font-size:10.5px;color:#bdbdbd;font-weight:normal;font-style:italic;">1s</div>
<div class="t" style="left:865.91px;top:905.61px;font-size:10.5px;color:#bdbdbd;font-weight:normal;font-style:italic;">2s</div>
<div class="t" style="left:1153.91px;top:905.61px;font-size:10.5px;color:#bdbdbd;font-weight:normal;font-style:italic;">3s</div>
<div class="t" style="left:1381.00px;top:80.01px;font-size:10.5px;color:#8a8a8a;font-weight:bold;font-style:normal;letter-spacing:-0.088px;">Assets</div>
<div class="t" style="left:1430.50px;top:80.01px;font-size:10.5px;color:#8a8a8a;font-weight:bold;font-style:normal;letter-spacing:-0.015px;">Properties</div>
<div class="t" style="left:1498.40px;top:80.01px;font-size:10.5px;color:#8a8a8a;font-weight:bold;font-style:normal;letter-spacing:-0.004px;">Color</div>
<div class="t" style="left:1541.20px;top:80.01px;font-size:10.5px;color:#8a8a8a;font-weight:bold;font-style:normal;letter-spacing:0.014px;">Align</div>
<div class="t" style="left:1582.90px;top:80.01px;font-size:10.5px;color:#f4f4f4;font-weight:bold;font-style:normal;letter-spacing:0.184px;">Library</div>
<div class="t" style="left:1387.40px;top:104.39px;font-size:11px;color:#f0f0f0;font-weight:normal;font-style:normal;letter-spacing:-0.230px;">pacing23.fla</div>
<div class="t" style="left:1376.20px;top:269.79px;font-size:11px;color:#f0f0f0;font-weight:normal;font-style:normal;letter-spacing:0.124px;">2 items</div>
<div class="t" style="left:1389.50px;top:297.31px;font-size:10.5px;color:#e0e0e0;font-weight:normal;font-style:normal;letter-spacing:-0.270px;">Name</div>
<div class="t" style="left:1620.60px;top:297.31px;font-size:10.5px;color:#e0e0e0;font-weight:normal;font-style:normal;letter-spacing:-0.280px;">Linkage</div>
<div class="t" style="left:1418.60px;top:324.99px;font-size:11px;color:#f4f4f4;font-weight:normal;font-style:normal;letter-spacing:-0.034px;">circle</div>
</div>
</body></html>
